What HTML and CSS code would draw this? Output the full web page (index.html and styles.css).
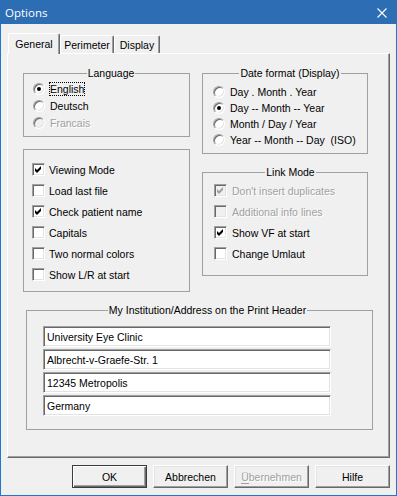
FILE: index.html
```html
<!DOCTYPE html>
<html lang="en">
  <head>
    <meta charset="UTF-8" />
    <meta name="viewport" content="width=device-width, initial-scale=1.0" />
    <title>Options</title>
    <link rel="stylesheet" href="styles.css">
  </head>
  <body>
    <div class="window">
      <div class="titlebar">
        <span class="title">Options</span>
        <svg class="close" width="10" height="10" viewBox="0 0 10 10">
          <path d="M0.5 0.5 L9.5 9.5 M9.5 0.5 L0.5 9.5" stroke="#fff" stroke-width="1.1" fill="none" />
        </svg>
      </div>

      <div class="body">
        <!-- Tabs -->
        <div class="tabs">
          <div class="tab active tab-general">General</div>
          <div class="tab tab-perimeter">Perimeter</div>
          <div class="tab tab-display">Display</div>
        </div>

        <div class="panel">
          <div class="columns">
            <div class="col">
              <fieldset class="group lang">
                <legend>Language</legend>
                <div class="opt"><span class="radio on"></span><span class="focus">English</span></div>
                <div class="opt"><span class="radio"></span>Deutsch</div>
                <div class="opt disabled"><span class="radio"></span>Francais</div>
              </fieldset>

              <div class="group opts">
                <div class="opt"><span class="check on"><svg viewBox="0 0 7 7"><path d="M0 2 2 4 6 0 6 3 2 7 0 5Z" /></svg></span>Viewing Mode</div>
                <div class="opt"><span class="check"></span>Load last file</div>
                <div class="opt"><span class="check on"><svg viewBox="0 0 7 7"><path d="M0 2 2 4 6 0 6 3 2 7 0 5Z" /></svg></span>Check patient name</div>
                <div class="opt"><span class="check"></span>Capitals</div>
                <div class="opt"><span class="check"></span>Two normal colors</div>
                <div class="opt"><span class="check"></span>Show L/R at start</div>
              </div>
            </div>

            <div class="col">
              <fieldset class="group date">
                <legend>Date format (Display)</legend>
                <div class="opt"><span class="radio"></span>Day . Month . Year</div>
                <div class="opt"><span class="radio on"></span>Day -- Month -- Year</div>
                <div class="opt"><span class="radio"></span>Month / Day / Year</div>
                <div class="opt"><span class="radio"></span>Year -- Month -- Day&nbsp; (ISO)</div>
              </fieldset>

              <fieldset class="group link">
                <legend>Link Mode</legend>
                <div class="opt disabled"><span class="check on"><svg viewBox="0 0 7 7"><path d="M0 2 2 4 6 0 6 3 2 7 0 5Z" /></svg></span>Don't insert duplicates</div>
                <div class="opt disabled"><span class="check"></span>Additional info lines</div>
                <div class="opt"><span class="check on"><svg viewBox="0 0 7 7"><path d="M0 2 2 4 6 0 6 3 2 7 0 5Z" /></svg></span>Show VF at start</div>
                <div class="opt"><span class="check"></span>Change Umlaut</div>
              </fieldset>
            </div>
          </div>

          <fieldset class="group address">
            <legend>My Institution/Address on the Print Header</legend>
            <div class="fields">
              <input class="field" type="text" value="University Eye Clinic" />
              <input class="field" type="text" value="Albrecht-v-Graefe-Str. 1" />
              <input class="field" type="text" value="12345 Metropolis" />
              <input class="field" type="text" value="Germany" />
            </div>
          </fieldset>
        </div>

        <div class="buttons">
          <button class="btn default">OK</button>
          <button class="btn">Abbrechen</button>
          <button class="btn" disabled><u>Ü</u>bernehmen</button>
          <button class="btn">Hilfe</button>
        </div>
      </div>
    </div>
  </body>
</html>
```

FILE: styles.css
```css
* {
  box-sizing: border-box;
}

body {
  margin: 0;
  font-family: "Liberation Sans", Arial, sans-serif;
  font-size: 10.5px;
  color: #000;
  background: #f0f0f0;
}

.window {
  width: 397px;
  height: 496px;
  display: flex;
  flex-direction: column;
  background: #f0f0f0;
  border: 1px solid #1f78cf;
  border-top: none;
}

.titlebar {
  height: 24px;
  flex-shrink: 0;
  display: flex;
  align-items: center;
  justify-content: space-between;
  background: #2d6db3;
  padding: 1px 10px 0 4px;
  margin: 0 -1px;
}

.title {
  font-family: "Open Sans", "Liberation Sans", sans-serif;
  font-size: 11.5px;
  color: #fff;
  padding-left: 1px;
}

.body {
  display: flex;
  flex-direction: column;
  padding: 0 6px 7px 6px;
}

/* Tabs */
.tabs {
  display: flex;
  align-items: flex-end;
  height: 20px;
  margin-top: 9px;
  padding-left: 1px;
}

.tab {
  height: 18px;
  display: flex;
  align-items: center;
  justify-content: center;
  border: 1px solid;
  border-color: #fff #696969 transparent #fff;
  border-bottom: none;
  border-radius: 2px 2px 0 0;
  box-shadow: inset -1px 0 0 #a0a0a0;
  padding-top: 1px;
}

.tab.active {
  height: 21px;
  margin-bottom: -1px;
  position: relative;
  background: #f0f0f0;
  padding-top: 0;
}

.tab-general {
  width: 52px;
}

.tab-perimeter {
  width: 54px;
}

.tab-display {
  width: 46px;
}

.panel {
  height: 405px;
  border: 1px solid;
  border-color: #fff #696969 #696969 #fff;
  box-shadow: inset -1px -1px 0 #a0a0a0;
  padding: 13px 0 0 15px;
}

.columns {
  display: grid;
  grid-template-columns: 167px 166px;
  column-gap: 12px;
  align-items: start;
}

.col {
  display: flex;
  flex-direction: column;
  gap: 12px;
}

/* Group boxes */
.group {
  margin: 0;
  padding: 0;
  min-width: 0;
  border: 1px solid #a0a0a0;
}

.group legend {
  margin: 0 auto;
  padding: 0 1px;
  line-height: 13px;
}

.lang {
  height: 70px;
  padding-left: 9px;
}

.lang .opt {
  height: 17px;
  gap: 5px;
}

.opts {
  height: 143px;
  padding: 9px 0 0 8px;
}

.opts .opt {
  height: 21px;
  gap: 4px;
}

.date {
  height: 87px;
  padding: 4px 0 0 10px;
}

.date .opt {
  height: 16px;
  gap: 5px;
}

.link {
  height: 110px;
  padding: 1px 0 0 11px;
}

.link .opt {
  height: 21px;
  gap: 5px;
}

.opt {
  display: flex;
  align-items: center;
  white-space: nowrap;
}

.opt.disabled {
  color: #a0a0a0;
  text-shadow: 1px 1px 0 #fff;
}

.focus {
  outline: 1px dotted #000;
}

.radio {
  width: 12px;
  height: 12px;
  flex-shrink: 0;
  border-radius: 50%;
  background: #fff;
  border: 1px solid;
  border-color: #a0a0a0 #fff #fff #a0a0a0;
  box-shadow: inset 1px 1px 0 #696969, inset -1px -1px 0 #e3e3e3;
  display: flex;
  align-items: center;
  justify-content: center;
}

.radio.on::after {
  content: "";
  width: 4px;
  height: 4px;
  border-radius: 50%;
  background: #000;
}

.disabled .radio,
.disabled .check {
  background: #f0f0f0;
}

.check {
  width: 13px;
  height: 13px;
  flex-shrink: 0;
  background: #fff;
  border: 1px solid;
  border-color: #a0a0a0 #fff #fff #a0a0a0;
  box-shadow: inset 1px 1px 0 #696969, inset -1px -1px 0 #e3e3e3;
  display: flex;
  align-items: center;
  justify-content: center;
}

.check svg {
  width: 7px;
  height: 7px;
  fill: #000;
}

.disabled .check svg {
  fill: #a0a0a0;
}

/* Address */
.address {
  height: 126px;
  width: 347px;
  margin: 12px 0 0 3px;
  padding: 9px 0 0 16px;
}

.fields {
  display: flex;
  flex-direction: column;
  gap: 2px;
}

.field {
  width: 288px;
  height: 21px;
  margin: 0;
  padding: 0 2px 0 3px;
  font: inherit;
  color: #000;
  background: #fff;
  border: 1px solid;
  border-color: #a0a0a0 #fff #fff #a0a0a0;
  box-shadow: inset 1px 1px 0 #696969, inset -1px -1px 0 #e3e3e3;
  outline: none;
}

/* Buttons */
.buttons {
  display: flex;
  justify-content: flex-end;
  gap: 6px;
  margin-top: 7px;
}

.btn {
  width: 75px;
  height: 23px;
  padding: 0;
  font: inherit;
  color: #000;
  background: #f0f0f0;
  border: 1px solid;
  border-color: #fff #696969 #696969 #fff;
  box-shadow: inset -1px -1px 0 #a0a0a0, inset 1px 1px 0 #e3e3e3;
}

.btn.default {
  border-color: #3c3c3c;
  box-shadow: inset 1px 1px 0 #fff, inset -1px -1px 0 #696969, inset -2px -2px 0 #a0a0a0;
}

.btn:disabled {
  color: #a0a0a0;
  text-shadow: 1px 1px 0 #fff;
}

.btn u {
  text-decoration: none;
  border-bottom: 1px solid #a0a0a0;
}
```
